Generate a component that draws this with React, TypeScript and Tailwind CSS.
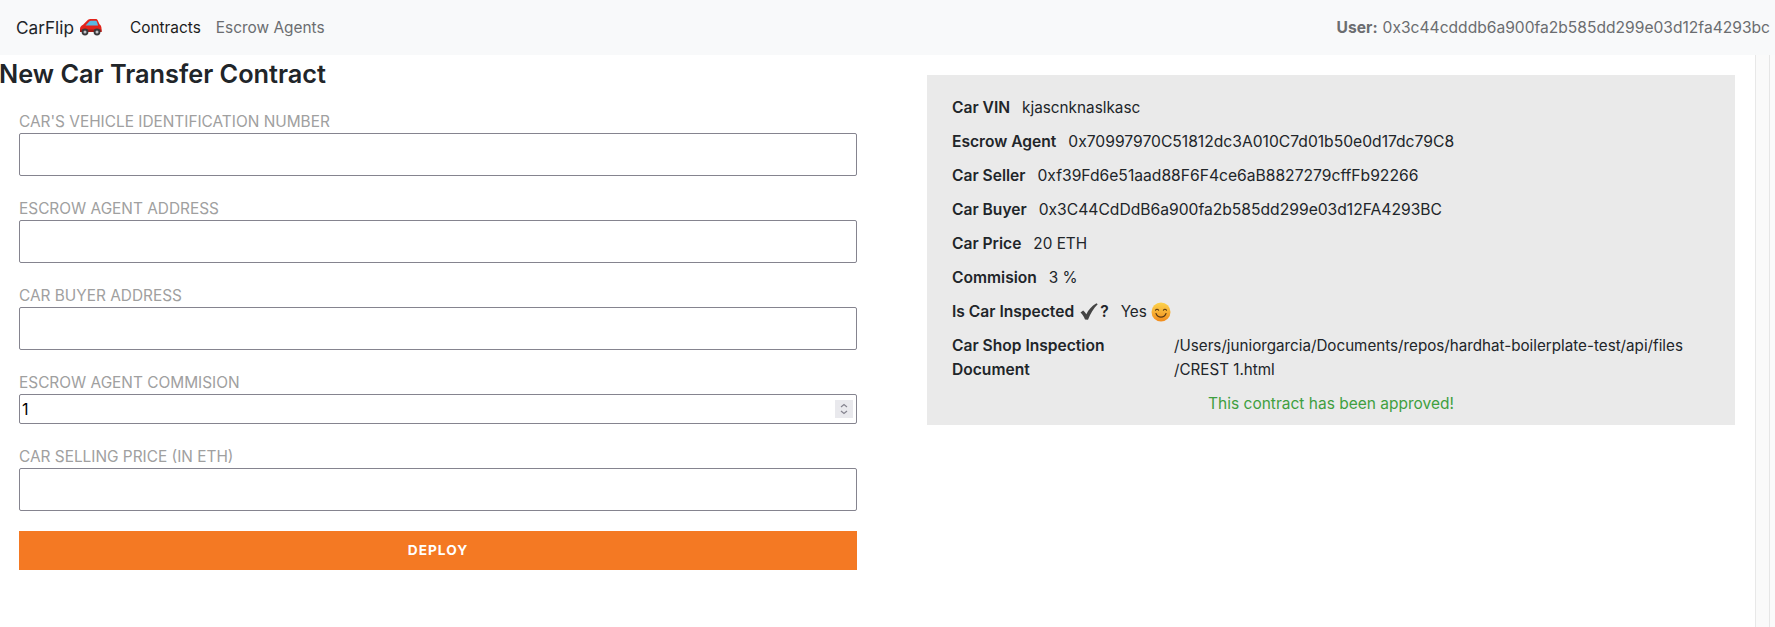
const inter = "font-['Inter','Liberation_Sans',sans-serif]";

function CarIcon() {
  return (
    <svg viewBox="0 0 23 18" className="ml-[5px] h-[18px] w-[23px]">
      <path d="M1 11c0-2 1.200-3.300 3-4.200L9 1.800C9.700 1.200 10.500 1 11.300 1h5.200c1 0 1.800.5 2.300 1.400l1.700 3.800C21.800 7.200 22.500 8.600 22.500 10.500V14H1z" fill="#e2231a" />
      <path d="M6.500 7.500l4-4.200c.4-.4.800-.6 1.300-.6h4.900c.5 0 .9.300 1.100.8l1.300 4z" fill="#58b9e3" />
      <rect x="1" y="11.500" width="21.500" height="2.500" fill="#a81c16" />
      <circle cx="6" cy="14" r="3.400" fill="#3a3a3c" />
      <circle cx="18" cy="14" r="3.400" fill="#3a3a3c" />
      <circle cx="6" cy="14" r="1.500" fill="#c4c4c8" />
      <circle cx="18" cy="14" r="1.500" fill="#c4c4c8" />
    </svg>
  );
}

function CheckIcon() {
  return (
    <svg viewBox="0 0 18 17" className="mr-[2px] ml-[6px] inline-block h-[17px] w-[18px] align-[-3px]">
      <path d="M0.500 9.500L3.200 7.500C4.500 8.600 5.500 10 6.300 11.200C8.500 7 11.500 3.200 16.500 0.300L17.700 1.200C13.500 5.500 10.500 10.500 8 16.700L5 16.500C4 13.800 2.500 11.500 0.500 9.500Z" fill="#444444" />
    </svg>
  );
}

function SmileIcon() {
  return (
    <svg viewBox="0 0 20 20" className="ml-[4px] h-[20px] w-[20px]">
      <defs>
        <linearGradient id="smile" x1="0" y1="0" x2="0" y2="1">
          <stop offset="0" stopColor="#fcd34d" />
          <stop offset="1" stopColor="#f28c1c" />
        </linearGradient>
      </defs>
      <circle cx="10" cy="10" r="9.500" fill="url(#smile)" />
      <path d="M4.500 8.200c.7-1.300 2.400-1.300 3.100 0M12.400 8.200c.7-1.300 2.400-1.300 3.100 0" fill="none" stroke="#5b3a12" strokeWidth="1.100" strokeLinecap="round" />
      <path d="M5 11.500c1 2.600 3 3.600 5 3.600s4-1 5-3.600" fill="none" stroke="#5b3a12" strokeWidth="1.200" strokeLinecap="round" />
    </svg>
  );
}

function Field({ label, value, className, spinner }: { label: string; value?: string; className: string; spinner?: boolean }) {
  return (
    <div>
      <div className="h-[20px] text-[15.400px] leading-[20px] text-[#a0a0a0] uppercase">{label}</div>
      <div className={`mt-[1px] flex items-center justify-between rounded-[2px] border border-[#85848f] bg-white pr-[3px] pl-[2px] text-[16px] text-black ${className}`}>
        <span>{value}</span>
        {spinner && (
          <span className="flex h-[18px] w-[18px] flex-col items-center justify-center bg-[#e9e9ed]">
            <svg viewBox="0 0 10 12" className="h-[14px] w-[10px]" fill="none" stroke="#85848f" strokeWidth="1.200">
              <path d="M2 4l3-2.500L8 4M2 8l3 2.500L8 8" />
            </svg>
          </span>
        )}
      </div>
    </div>
  );
}

function Row({ label, children }: { label: React.ReactNode; children: React.ReactNode }) {
  return (
    <div className="flex h-[34px] items-center text-[15.300px] text-[#212529]">
      <span className="mr-[12px] text-[15.600px] font-semibold">{label}</span>
      {children}
    </div>
  );
}

export default function App() {
  return (
    <div className={`flex h-[627px] flex-col overflow-hidden bg-white ${inter}`}>
      <nav className="flex h-[55px] items-center justify-between bg-[#f8f9fa] pr-[5px] pl-[16px] text-[15.400px]">
        <div className="flex items-center">
          <div className="flex items-center text-[17.200px] text-[#212529]">
            CarFlip
            <CarIcon />
          </div>
          <span className="ml-[28px] text-[#1c1c1c]">Contracts</span>
          <span className="ml-[15px] text-[#6b6d70]">Escrow Agents</span>
        </div>
        <div className="text-[15.600px] text-[#6b6d70]">
          <span className="mr-[5px] font-bold">User:</span>
          0x3c44cdddb6a900fa2b585dd299e03d12fa4293bc
        </div>
      </nav>

      <div className="flex flex-1">
        <main className="flex flex-1">
          <section className="w-[927px]">
            <h1 className="mt-[2px] -ml-px text-[25.300px] leading-[34px] font-semibold text-[#212529]">New Car Transfer Contract</h1>
            <form className="mt-[21px] flex w-[857px] flex-col gap-[23px] pl-[19px]">
              <Field label="Car's Vehicle Identification Number" className="h-[43px]" />
              <Field label="Escrow Agent Address" className="h-[43px]" />
              <Field label="Car Buyer Address" className="h-[43px]" />
              <Field label="Escrow Agent Commision" value="1" spinner className="h-[30px]" />
              <Field label="Car Selling Price (in ETH)" className="h-[43px]" />
              <button type="button" className="-mt-[3px] h-[39px] bg-[#f47923] text-[13.700px] font-bold tracking-[1px] text-white uppercase">
                Deploy
              </button>
            </form>
          </section>

          <section className="mt-[20px] flex h-[350px] w-[808px] flex-col bg-[#eaeaea] px-[25px] pt-[16px]">
            <Row label="Car VIN">kjascnknaslkasc</Row>
            <Row label="Escrow Agent">
              <span className="text-[15.650px]">0x70997970C51812dc3A010C7d01b50e0d17dc79C8</span>
            </Row>
            <Row label="Car Seller">
              <span className="text-[15.650px]">0xf39Fd6e51aad88F6F4ce6aB8827279cffFb92266</span>
            </Row>
            <Row label="Car Buyer">
              <span className="text-[15.650px]">0x3C44CdDdB6a900fa2b585dd299e03d12FA4293BC</span>
            </Row>
            <Row label="Car Price">20 ETH</Row>
            <Row label="Commision">3 %</Row>
            <Row
              label={
                <>
                  Is Car Inspected
                  <CheckIcon />?
                </>
              }
            >
              Yes
              <SmileIcon />
            </Row>
            <div className="mt-[5px] grid grid-cols-[222px_1fr] text-[15.200px] leading-[24px] text-[#212529]">
              <span className="w-[180px] text-[15.600px] font-semibold">Car Shop Inspection Document</span>
              <span>
                /Users/juniorgarcia/Documents/repos/hardhat-boilerplate-test/api/files
                <br />
                /CREST 1.html
              </span>
            </div>
            <p className="mt-[10px] text-center text-[15.500px] text-[#3f9f3f]">This contract has been approved!</p>
          </section>
        </main>
        <aside className="w-[20px] border-l border-[#e8e8e8] bg-[#fafafa]">
          <div className="h-full w-[14px] border-r border-[#e6e6e6]" />
        </aside>
      </div>
    </div>
  );
}
